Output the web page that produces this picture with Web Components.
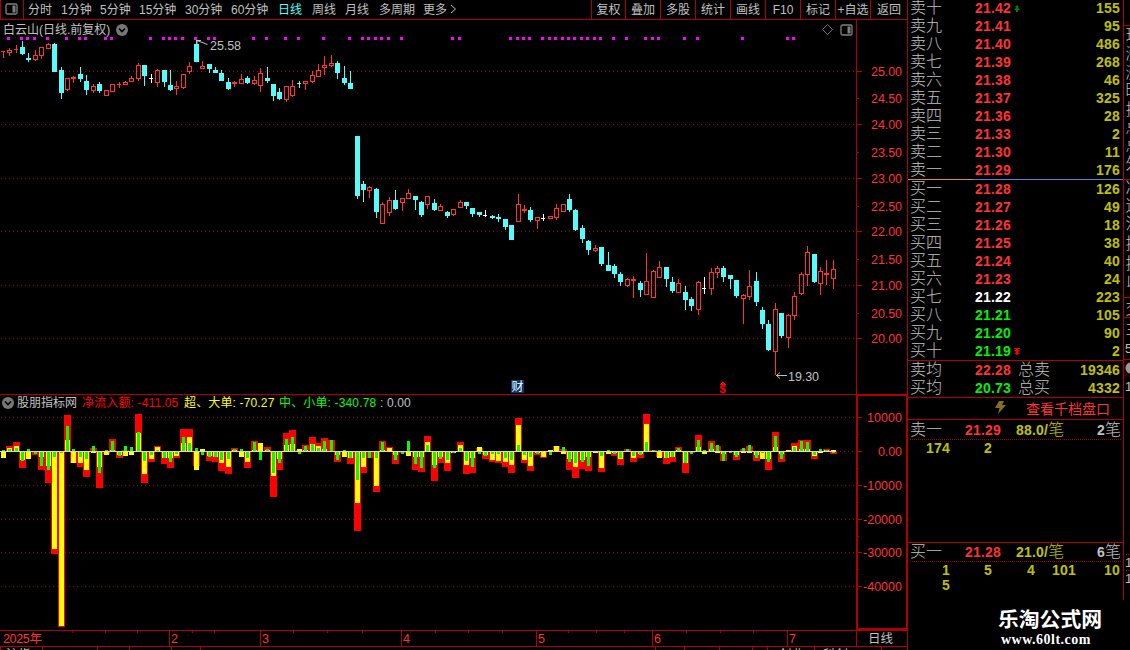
<!DOCTYPE html>
<html lang="zh-CN">
<head>
<meta charset="utf-8">
<title>白云山 日线</title>
<style>
    body {
        margin: 0;
        background: #000;
        color: #c0c0c0;
        overflow: hidden;
        font: 12px/16px "Liberation Sans", "Noto Sans CJK SC", sans-serif;
    }
</style>
</head>
<body>
<stock-terminal>
    <period-bar slot="toolbar"></period-bar>
    <price-chart slot="main"></price-chart>
    <flow-chart slot="main"></flow-chart>
    <date-axis slot="main"></date-axis>
    <order-book slot="book"></order-book>
    <side-strip slot="side"></side-strip>
</stock-terminal>

<script>
const LINE = '#b00000';
const RED = '#ff3232';
const CYAN = '#54fcfc';

// x of the centre column of bar i
const barX = i => Math.floor(3.2 + 6.435 * i);
const rect = (x, y, w, h, fill) => `<rect x="${x}" y="${y}" width="${w}" height="${h}" fill="${fill}"/>`;
const label = (x, y, text, fill, length, anchor = 'start') =>
    `<text x="${x}" y="${y}" fill="${fill}" text-anchor="${anchor}" textLength="${length}">${text}</text>`;
const dotted = y => `<path d="M1 ${y + .5}H856" stroke="#a00000" stroke-dasharray="1 3"/>`;
const chevron = `<svg width="12" height="12" viewBox="0 0 12 12"><circle cx="6" cy="6" r="6" fill="#777"/><path d="M3 4.5L6 7.5L9 4.5" fill="none" stroke="#000" stroke-width="1.6"/></svg>`;
const panelIcon = `<svg width="13" height="12" viewBox="0 0 13 12"><rect x="1" y="1" width="11" height="10" rx="1.5" fill="none" stroke="#808080" stroke-width="1.3"/><rect x="7.5" y="2.5" width="3" height="7" fill="#808080"/></svg>`;

class StockTerminal extends HTMLElement {
    constructor() {
        super();
        this.attachShadow({ mode: 'open' }).innerHTML = `
        <style>
            :host { display: grid; grid-template-columns: 908px 216px 6px; height: 650px; overflow: hidden; }
            .left { display: flex; flex-direction: column; min-width: 0; height: 650px; box-sizing: border-box; border-right: 1px solid ${LINE}; }
        </style>
        <div class="left"><slot name="toolbar"></slot><slot name="main"></slot></div>
        <slot name="book"></slot>
        <slot name="side"></slot>`;
    }
}

class PeriodBar extends HTMLElement {
    connectedCallback() {
        const periods = [['分时', 33], ['1分钟', 39], ['5分钟', 39], ['15分钟', 46], ['30分钟', 46], ['60分钟', 47], ['日线', 34], ['周线', 33], ['月线', 34], ['多周期', 44], ['更多', 27]];
        const tools = [['复权', 34], ['叠加', 35], ['多股', 35], ['统计', 35], ['画线', 35], ['F10', 35], ['标记', 35], ['+自选', 35], ['返回', 37]];
        this.attachShadow({ mode: 'open' }).innerHTML = `
        <style>
            :host { display: flex; flex: none; height: 19px; border-bottom: 1px solid ${LINE}; line-height: 20px; white-space: nowrap; }
            .toggle { display: flex; align-items: center; box-sizing: border-box; width: 24px; padding: 0 0 2px 4px; border: solid ${LINE}; border-width: 0 1px; margin-right: 4px; }
            .active { color: ${CYAN}; }
            .more { align-self: center; margin-top: -1px; }
            .tools { display: flex; margin-left: auto; }
            .tools span { box-sizing: border-box; height: 19px; border-left: 1px solid ${LINE}; text-align: center; }
        </style>
        <div class="toggle">${panelIcon}</div>
        ${periods.map(([name, w]) => `<span class="${name === '日线' ? 'active' : ''}" style="width:${w}px">${name}</span>`).join('')}
        <svg class="more" width="7" height="10"><path d="M1 1L5.5 5L1 9" fill="none" stroke="#c0c0c0"/></svg>
        <div class="tools">${tools.map(([name, w]) => `<span style="width:${w}px">${name}</span>`).join('')}</div>`;
    }
}

// kind, high, body top, body bottom, low (screen rows; r = up, c = down, w = flat)
const candles = `r51,51,52,58 r48,50,53,56 r45,49,50,53 c41,47,54,55 c53,58,60,62 r50,55,60,61 r47,47,56,59 r43,44,49,49 c43,44,72,72 c67,70,93,99
r78,78,90,91 r76,77,79,83 c67,74,79,82 c75,81,90,95 r84,86,91,93 c82,84,91,93 r90,90,96,96 r84,84,92,92 r82,84,85,88 r81,82,85,85
r76,78,82,82 r63,65,79,81 c65,65,76,86 w74,78,79,83 r69,70,83,87 c70,70,82,87 c70,85,90,91 r81,86,89,95 r74,74,88,89 r62,66,72,74
c40,44,62,62 r61,66,69,69 c64,64,69,73 c67,70,73,73 c70,73,81,81 c78,82,89,90 r81,82,84,87 r74,79,84,84 c76,78,83,84 r76,80,84,85
r68,73,86,92 c67,78,81,83 c84,84,96,101 c88,92,99,100 r86,86,100,102 r80,86,96,97 c81,83,84,88 r81,81,84,90 r71,75,82,83 r64,70,77,77
r56,65,68,75 r55,63,66,67 c61,63,73,79 c66,78,83,85 c71,83,89,89 c136,136,196,199 c181,184,190,202 r186,187,191,198 c188,189,212,218 r202,204,224,224
r197,200,213,216 c190,200,209,210 r198,198,203,211 r189,193,199,199 c196,196,200,210 c201,202,215,217 r196,196,205,209 c199,203,210,211 r204,206,211,211 c211,212,216,218
r209,209,215,216 r200,202,208,208 c202,202,206,209 c208,208,214,217 c212,212,215,217 w210,215,216,217 c215,216,218,219 c214,217,219,222 c219,219,227,230 c225,225,240,240
r194,204,222,222 r205,209,211,213 c207,210,220,222 r217,217,221,229 w214,218,219,221 r216,216,219,219 r204,208,218,220 r204,204,212,212 c194,199,210,212 c209,210,230,231
c225,228,239,243 c240,241,250,255 r245,248,251,252 c247,247,264,266 c252,265,271,271 c264,266,274,278 c272,274,282,286 r278,279,286,287 r276,279,281,298 c281,283,290,297
r253,281,295,295 r270,271,298,298 r261,267,278,278 c267,267,279,287 c277,282,291,293 r279,283,293,293 c286,292,300,310 c297,299,306,311 r281,282,310,315 w277,288,289,294
r268,272,289,295 r266,268,273,278 c266,268,277,282 c275,275,279,289 c280,280,296,298 r294,295,299,324 r270,286,297,300 c272,281,302,306 c307,310,324,329 c320,324,350,351
r303,309,352,375 c313,313,336,338 r314,315,338,348 r292,296,316,320 r272,274,294,295 r246,252,275,286 c254,254,282,283 r267,271,284,295 r260,273,275,285 r260,269,279,289`
    .split(/\s+/).map(c => [c[0], ...c.slice(1).split(',').map(Number)]);

const signals = [1, 3, 4, 5, 7, 10, 12, 13, 16, 17, 23, 25, 26, 27, 28, 30, 32, 33, 39, 41, 44, 46, 50, 54, 56, 57, 58, 59, 60, 62, 70, 71, 79, 80, 81, 82,
    84, 85, 86, 87, 88, 89, 90, 91, 92, 93, 95, 97, 100, 101, 102, 106, 108, 115, 122, 123];

class PriceChart extends HTMLElement {
    connectedCallback() {
        this.attachShadow({ mode: 'open' }).innerHTML = `
        <style>
            :host { display: block; flex: none; height: 374px; position: relative; }
            header { position: absolute; left: 3px; right: 54px; top: 2px; display: flex; align-items: center; height: 15px; }
            header span { width: 113px; white-space: nowrap; }
            .right { margin-left: auto; display: flex; align-items: center; gap: 7px; }
            .plot { display: block; font-size: 12.5px; }
        </style>
        <svg class="plot" width="907" height="374" viewBox="0 20 907 374" shape-rendering="crispEdges">${this.plot()}</svg>
        <header>
            <span>白云山(日线.前复权)</span>${chevron}
            <div class="right">
                <svg width="11" height="11"><path d="M5.5 .5L10.5 5.5L5.5 10.5L.5 5.5Z" fill="none" stroke="#777"/></svg>${panelIcon}
            </div>
        </header>`;
    }

    candle([kind, high, top, bottom, low], i) {
        const x = barX(i);
        const color = { r: RED, c: CYAN, w: '#fff' }[kind];
        const height = bottom - top;
        if (kind === 'r' && height > 2) {
            return rect(x, high, 1, top - high, color) + rect(x, bottom, 1, low - bottom, color) +
                `<rect x="${x - 1.5}" y="${top + .5}" width="4" height="${height - 1}" fill="none" stroke="${color}"/>`;
        }
        return rect(x, high, 1, low - high, color) + rect(x - 2, top, height === 1 ? 4 : 5, height, color);
    }

    plot() {
        const out = [71, 124, 178, 231, 285, 338].map(dotted);
        signals.forEach(i => out.push(rect(barX(i) - 2, 37, 3, 3, '#f0f')));
        candles.forEach((c, i) => out.push(this.candle(c, i)));
        out.push(rect(856, 20, 1, 374, LINE));
        [71, 98, 124, 152, 178, 206, 231, 259, 285, 313, 338].forEach((y, i) => {
            out.push(rect(857, y, i % 2 ? 2 : 5, 1, LINE));
            out.push(label(871, y + 5, (25 - i / 2).toFixed(2), RED, 31));
        });
        out.push(`<path d="M207.500 44.500L197 40.500M197 44V40.500H201M776 375.500H787M780 372.500L776.500 375.500L780 378.500" fill="none" stroke="#c0c0c0" shape-rendering="auto"/>`);
        out.push(label(210, 50, '25.58', '#c0c0c0', 31), label(788, 381, '19.30', '#c0c0c0', 31));
        // report and dividend markers
        out.push(rect(511, 380, 13, 13, '#003a70'), `<text x="511.500" y="391" font-size="12" fill="#fff">财</text>`);
        out.push(`<text x="719.500" y="393" font-size="11" font-weight="bold" fill="#f00">$</text><path d="M720 385L723 381L726 385Z" fill="#f00"/>`);
        return out.join('');
    }
}

// net, large orders, small orders: bar heights, positive upwards
const flows = `0,-6,1 5,3,2 9,5,3 -16,-8,-9 0,-7,2 -3,0,-2 -18,-5,-14 -31,-14,-18 -102,-97,-5 -175,-174,-1
36,11,25 -11,-11,2 -15,-11,-5 -25,-18,-7 3,-1,5 -36,-15,-21 -2,-3,1 12,1,10 -6,-3,-4 1,-4,5
0,-3,4 37,18,19 -31,-22,-9 -10,-7,-3 5,4,1 -12,-6,-6 -16,-6,-10 -6,-4,-2 22,8,14 22,14,8
-14,-18,3 0,2,-3 -9,-4,-5 -10,-5,-5 -19,-11,-8 -22,-15,-7 3,1,2 0,-5,2 -16,-10,-6 10,1,9
0,8,-8 4,1,2 -45,-24,-21 -18,-7,-11 18,6,12 21,7,14 1,2,-2 6,1,5 14,7,7 8,5,3
13,2,10 11,0,11 -10,-3,-8 0,-5,1 -12,-6,-6 -79,-51,-28 -21,-15,-6 -6,0,-6 -40,-34,-6 10,1,9
4,3,0 -12,-3,-8 -1,0,-2 0,-4,10 -18,-5,-12 -20,-5,-16 15,9,6 -29,-13,-16 -11,-5,-7 -19,-11,-8
0,-1,-1 9,6,3 -22,-13,-9 -21,-6,-15 3,4,-2 -7,-3,-4 -10,-8,-2 -11,-9,-2 -15,-10,-6 -21,-13,-8
33,26,6 -11,-8,-3 -19,-14,-5 -3,-1,-2 -6,-5,0 0,1,-3 5,5,0 2,-2,4 -18,-7,-10 -26,-15,-11
-17,-8,-10 -19,-5,-14 0,-1,0 -20,-16,-4 0,-2,1 -4,-1,-2 -13,-7,-6 2,0,2 -10,-6,-4 -6,-2,-3
37,27,9 1,0,1 -5,-6,1 -12,-6,-6 -10,-5,-5 4,1,3 -21,-11,-11 -1,0,-2 16,4,11 0,-2,1
10,2,8 5,-1,6 -9,-2,-9 0,0,-1 -8,-3,-5 2,-1,3 5,-1,6 -9,-3,-6 -7,-7,-1 -18,-7,-10
19,4,15 -10,-2,-7 0,1,0 8,5,4 11,2,10 11,2,9 -7,-4,-3 0,-1,2 2,1,1 -2,1,-1`
    .split(/\s+/).map(f => f.split(',').map(Number));

class FlowChart extends HTMLElement {
    connectedCallback() {
        this.attachShadow({ mode: 'open' }).innerHTML = `
        <style>
            :host { display: block; flex: none; height: 236px; position: relative; }
            header { position: absolute; left: 2px; top: 1px; display: flex; align-items: center; height: 16px; white-space: pre; }
            header span { flex: none; letter-spacing: .15px; }
            .plot { display: block; font-size: 12.5px; }
        </style>
        <svg class="plot" width="907" height="236" viewBox="0 394 907 236" shape-rendering="crispEdges">${this.plot()}</svg>
        <header>
            ${chevron}
            <span style="width:65px; margin-left:3px; letter-spacing:0">股朋指标网</span>
            <span style="width:102px; color:#f00">净流入额: -411.05</span>
            <span style="width:95px; color:#ff0">超、大单: -70.27</span>
            <span style="width:101px; color:#0f0">中、小单: -340.78</span>
            <span>: 0.00</span>
        </header>`;
    }

    bar(i, value, width, color) {
        if (!value) return '';
        const y = value > 0 ? 451 - value : 452;
        return rect(barX(i) - (width - 1) / 2, y, width, Math.abs(value), color);
    }

    plot() {
        const out = [417, 485, 519, 552, 586].map(dotted);
        [[7, '#f00'], [5, '#ff0'], [3, '#0f0']].forEach(([width, color], k) => {
            flows.forEach((f, i) => out.push(this.bar(i, f[k], width, color)));
        });
        out.push(rect(0, 451, 836, 1, '#d8d8d8'), rect(0, 394, 907, 1, LINE));
        out.push(`<path d="M836 451.500H857" stroke="#a00000" stroke-dasharray="1 3"/>`);
        out.push(`<path d="M857 629H907V395H857Z" fill="none" stroke="${LINE}" stroke-width="2"/>`);
        [417, 434, 451, 468, 485, 502, 519, 536, 552, 569, 586].forEach((y, i) => {
            out.push(rect(858, y, i % 2 ? 1 : 4, 1, LINE));
            if (i % 2 === 0) {
                const value = 10000 - i * 5000;
                const text = value ? String(value) : '0.00';
                out.push(label(902, y + 5, text, RED, value > 0 ? 35 : value ? 39 : 24, 'end'));
            }
        });
        return out.join('');
    }
}

class DateAxis extends HTMLElement {
    connectedCallback() {
        const months = [[169, 2], [260, 3], [401, 4], [536, 5], [652, 6], [787, 7]];
        const ticks = [72, 105, 137, 192, 214, 293, 327, 362, 435, 468, 502, 568, 596, 624, 686, 720, 753];
        const dividers = [0, 42, 97, 129, 171, 200, 655, 684, 719, 752, 767, 814, 881];
        const scraps = [[6, '#c0c0c0', '沪指'], [46, '#ff0', '346'], [84, '#ff0', '5'], [106, '#c0c0c0', '1'], [779, '#c0c0c0', '创业'], [823, '#c0c0c0', '科创']];
        this.attachShadow({ mode: 'open' }).innerHTML = `
        <style>
            :host { display: block; flex: none; height: 20px; overflow: hidden; }
            svg { display: block; }
        </style>
        <svg width="907" height="20" viewBox="0 630 907 20" font-size="12.5" shape-rendering="crispEdges">
            ${rect(0, 630, 907, 1, LINE)}${rect(0, 646, 907, 1, LINE)}${rect(856, 630, 1, 17, LINE)}
            ${months.map(([x, m]) => rect(x, 630, 1, 17, LINE) + label(x + 2, 643, m, RED, 7)).join('')}
            ${ticks.map(x => rect(x, 631, 1, 2, LINE)).join('')}
            ${dividers.map(x => rect(x, 647, 1, 3, LINE)).join('')}
            ${label(3, 643, '2025年', RED, 39)}
            <text x="868" y="643" fill="#c0c0c0">日线</text>
            ${scraps.map(([x, fill, text]) => `<text x="${x}" y="659" fill="${fill}">${text}</text>`).join('')}
        </svg>`;
    }
}

class BookRow extends HTMLElement {
    connectedCallback() {
        const { name, price, tone, volume, mark = '', total = '' } = this.dataset;
        const up = 'M3 0L5 2H4V3L6 5H4V7H2V5H0L2 3V2H1Z';
        const down = 'M0 0H6V1H4V2H6L4 4V5H6L3 7L0 5H2V4L0 2H2V1H0Z';
        const arrow = mark && `<svg width="6" height="7"><path d="${mark === 'up' ? up : down}" fill="${mark === 'up' ? '#008000' : '#f00'}"/></svg>`;
        this.attachShadow({ mode: 'open' }).innerHTML = `
        <style>
            :host { display: flex; align-items: center; height: 18px; padding: 0 3px 0 2px; line-height: 18px; white-space: nowrap; }
            .name, .total { font-size: 16px; font-weight: 300; }
            .name { width: 65px; }
            .price { width: 39px; color: ${tone}; }
            .price, .volume { font-size: 14px; font-weight: bold; letter-spacing: .2px; }
            .total { margin-left: 4px; }
            .volume { margin-left: auto; color: #c0c000; }
        </style>
        <span class="name">${name}</span><span class="price">${price}</span>${arrow}
        <span class="total">${total}</span><span class="volume">${volume}</span>`;
    }
}

class QueuePanel extends HTMLElement {
    connectedCallback() {
        const { name, price, average, count, orders } = this.dataset;
        this.attachShadow({ mode: 'open' }).innerHTML = `
        <style>
            :host { display: block; font-size: 14px; font-weight: bold; letter-spacing: .2px; color: #c0c000; }
            .head { display: flex; align-items: center; height: var(--head, 19px); padding: 0 2px; line-height: 18px; white-space: nowrap; }
            span { display: flex; align-items: center; }
            b { font-weight: 300; font-size: 16px; letter-spacing: 0; }
            .name { width: 55px; color: #c0c0c0; }
            .price { width: 51px; color: ${RED}; }
            .count { margin-left: auto; color: #c0c0c0; }
            .dots { display: block; }
            .orders { display: grid; grid-template-columns: 42px 42px 43px 41px 44px; line-height: 15px; padding-top: 1px; }
            .orders span { justify-content: flex-end; }
        </style>
        <div class="head">
            <b class="name">${name}</b><span class="price">${price}</span>
            <span>${average}/<b>笔</b></span><span class="count">${count}<b>笔</b></span>
        </div>
        <svg class="dots" width="215" height="1" shape-rendering="crispEdges"><path d="M2 .5H214" stroke="#a00000" stroke-dasharray="1 1"/></svg>
        <div class="orders">${orders.split(' ').map(o => `<span>${o}</span>`).join('')}</div>`;
    }
}

class OrderBook extends HTMLElement {
    connectedCallback() {
        const sells = [['十', '21.42', 155], ['九', '21.41', 95], ['八', '21.40', 486], ['七', '21.39', 268], ['六', '21.38', 46],
            ['五', '21.37', 325], ['四', '21.36', 28], ['三', '21.33', 2], ['二', '21.30', 11], ['一', '21.29', 176]];
        const buys = [['一', '21.28', 126], ['二', '21.27', 49], ['三', '21.26', 18], ['四', '21.25', 38], ['五', '21.24', 40],
            ['六', '21.23', 24], ['七', '21.22', 223], ['八', '21.21', 105], ['九', '21.20', 90], ['十', '21.19', 2]];
        const tone = p => p > 21.22 ? RED : p < 21.22 ? '#00f000' : '#fff';
        const row = side => ([n, p, v]) =>
            `<book-row data-name="${side}${n}" data-price="${p}" data-tone="${tone(+p)}" data-volume="${v}" data-mark="${p === '21.42' ? 'up' : p === '21.19' ? 'down' : ''}"></book-row>`;
        this.attachShadow({ mode: 'open' }).innerHTML = `
        <style>
            :host { display: flex; flex-direction: column; height: 650px; }
            .book { box-sizing: border-box; height: 600px; border-right: 1px solid ${LINE}; }
            .sells { margin-top: -1px; }
            .split { height: 1px; background: linear-gradient(90deg, #d89030 65px, #4c84d8 65px); }
            .average { border: solid ${LINE}; border-width: 1px 0; height: 36px; }
            .depth { display: flex; align-items: center; height: 21px; border-bottom: 1px solid ${LINE}; color: ${RED}; font-size: 14px; }
            .depth svg { margin: 0 20px 2px 87px; }
            .first { height: 122px; border-bottom: 1px solid ${LINE}; }
            .second { --head: 18px; }
            footer { padding-left: 90px; color: #fff; }
            .site { font: bold 20.800px/20px "Noto Sans CJK SC", sans-serif; margin-top: 8px; }
            .url { font: bold 14px/16px "Liberation Serif", serif; padding-left: 3px; letter-spacing: .5px; margin-top: 4px; }
        </style>
        <div class="book">
            <div class="sells">${sells.map(row('卖')).join('')}</div>
            <div class="split"></div>
            <div class="buys">${buys.map(row('买')).join('')}</div>
            <div class="average">
                <book-row data-name="卖均" data-price="22.28" data-tone="${RED}" data-total="总卖" data-volume="19346"></book-row>
                <book-row data-name="买均" data-price="20.73" data-tone="#00f000" data-total="总买" data-volume="4332"></book-row>
            </div>
            <div class="depth">
                <svg width="11" height="13"><path d="M4 0H9L7 4H11L3 13L4.500 7H0Z" fill="#807020"/></svg>查看千档盘口
            </div>
            <queue-panel class="first" data-name="卖一" data-price="21.29" data-average="88.0" data-count="2" data-orders="174 2"></queue-panel>
            <queue-panel class="second" data-name="买一" data-price="21.28" data-average="21.0" data-count="6" data-orders="1 5 4 101 10 5"></queue-panel>
        </div>
        <footer><div class="site">乐淘公式网</div><div class="url">www.60lt.com</div></footer>`;
    }
}

// left edge of the next quote panel, cut off by the window
class SideStrip extends HTMLElement {
    connectedCallback() {
        const words = [[41, '现'], [59, '涨'], [78, '涨'], [96, '昨'], [115, '振'], [133, '总'], [151, '总'], [169, '外'], [193, '净'], [211, '逆'], [229, '流'],
            [249, '换'], [269, '换'], [288, '以'], [314, '交'], [334, '主'], [353, '5'], [391, '1'], [567, '1'], [583, '1']];
        this.attachShadow({ mode: 'open' }).innerHTML = `
        <style>:host { display: block; overflow: hidden; } svg { display: block; }</style>
        <svg width="6" height="650" font-size="16" font-weight="300" fill="#c0c0c0">
            ${[25, 179, 297, 317, 359].map(y => rect(0, y, 6, 1, LINE)).join('')}
            ${rect(0, 361, 6, 16, '#280000')}<circle cx="7" cy="368" r="5.500" fill="#999"/>
            <path d="M2 554.500H6M2 570.500H6" stroke="${LINE}" stroke-dasharray="1 1"/>
            ${words.map(([y, word]) => `<text x="${word < '9' ? 1 : 1.5}" y="${y}" font-size="${word < '9' ? 13 : 16}">${word}</text>`).join('')}
        </svg>`;
    }
}

customElements.define('stock-terminal', StockTerminal);
customElements.define('period-bar', PeriodBar);
customElements.define('price-chart', PriceChart);
customElements.define('flow-chart', FlowChart);
customElements.define('date-axis', DateAxis);
customElements.define('book-row', BookRow);
customElements.define('queue-panel', QueuePanel);
customElements.define('order-book', OrderBook);
customElements.define('side-strip', SideStrip);
</script>
</body>
</html>
